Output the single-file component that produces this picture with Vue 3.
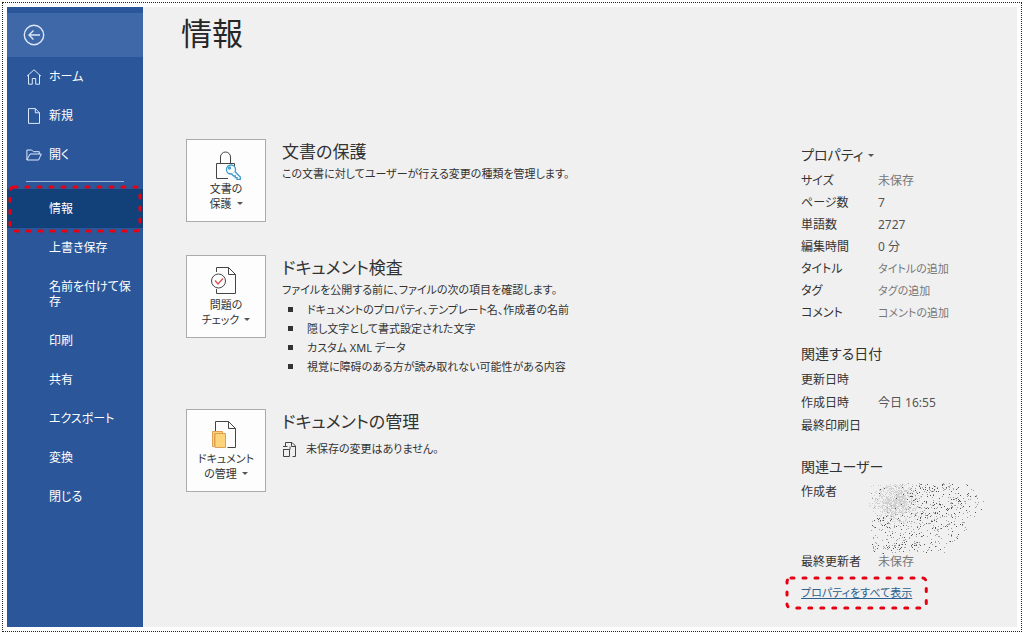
<script setup>
const places = [
  { label: 'ホーム', icon: 'home' },
  { label: '新規', icon: 'file' },
  { label: '開く', icon: 'folder' }
]
const commands = ['上書き保存', '名前を付けて保存', '印刷', '共有', 'エクスポート', '変換', '閉じる']
const checks = [
  'ドキュメントのプロパティ、テンプレート名、作成者の名前',
  '隠し文字として書式設定された文字',
  'カスタム XML データ',
  '視覚に障碍のある方が読み取れない可能性がある内容'
]
const properties = [
  { name: 'サイズ', value: '未保存' },
  { name: 'ページ数', value: '7', kind: 'strong' },
  { name: '単語数', value: '2727', kind: 'strong' },
  { name: '編集時間', value: '0 分', kind: 'strong' },
  { name: 'タイトル', value: 'タイトルの追加', kind: 'hint' },
  { name: 'タグ', value: 'タグの追加', kind: 'hint' },
  { name: 'コメント', value: 'コメントの追加', kind: 'hint' }
]
const dates = [
  { name: '更新日時', value: '' },
  { name: '作成日時', value: '今日 16:55', kind: 'strong' },
  { name: '最終印刷日', value: '' }
]

// Speckled pattern that hides the author's name
let seed = 7
const random = () => {
  seed = (seed * 16807) % 2147483647
  return seed / 2147483647
}
const dot = (x, y) => `M${Math.round(x)} ${Math.round(y)}.5h1`
const fine = []
for (let i = 0; i < 800; i++) {
  const x = 28 + (random() + random() + random() - 1.5) * 20
  const y = 18 + (random() + random() - 1) * 24
  if (y > 1) fine.push(dot(x, y))
}
const grey = []
const dark = []
while (grey.length + dark.length < 620) {
  const x = random() * 120
  const y = random() * 70
  const edge = y < 34 ? 120 - Math.abs(y - 20) * 0.8 : 112 - (y - 32) * 0.9
  const density = (y > 32 ? 0.9 : x > 40 ? 1 : 0.25) * (x > edge - 18 ? 0.45 : 1)
  if (x > 4 && x < edge && random() < density) {
    ;(random() < 0.35 ? dark : grey).push(dot(x, y))
  }
}
const finePath = fine.join('')
const greyPath = grey.join('')
const darkPath = dark.join('')
</script>

<template>
  <div class="frame">
    <nav class="side">
      <div class="back-bar">
        <button class="back" aria-label="戻る">
          <svg width="22" height="22" viewBox="0 0 22 22"><circle cx="11" cy="11" r="9.7" /><path d="M17 11H6M10.5 6.500L6 11l4.500 4.500" /></svg>
        </button>
      </div>
      <button v-for="p in places" :key="p.label" class="item">
        <svg v-if="p.icon === 'home'" width="16" height="16" viewBox="0 0 16 16"><path d="M1 7.200L8 .8l7 6.400M2.500 6v9.200h3.800V9.500h3.400v5.700h3.800V6" /></svg>
        <svg v-else-if="p.icon === 'file'" width="16" height="16" viewBox="0 0 16 16"><path d="M2.500.6h6.800l4.200 4.200v10.600h-11zM9.300.6v4.200h4.200" /></svg>
        <svg v-else width="16" height="16" viewBox="0 0 16 16"><path d="M.9 13V3h4.800l1.600 1.700h6V7M.9 13L4 7h11.300l-2.700 6z" /></svg>
        <span>{{ p.label }}</span>
      </button>
      <hr class="rule">
      <button class="item current" aria-current="page">
        <span>情報</span>
        <svg class="mark" aria-hidden="true"><rect x="2" y="2" rx="4" /></svg>
      </button>
      <button v-for="c in commands" :key="c" class="item"><span>{{ c }}</span></button>
    </nav>

    <main class="main">
      <h1>情報</h1>
      <div class="columns">
        <div class="actions">
          <section class="action">
            <button class="tile">
              <svg width="30" height="30" viewBox="0 0 30 30">
                <path class="ink" d="M17 28.500H5.500v-15h18V17M9.500 13.500V7a5 5 0 0 1 10 0v6.500" />
                <circle class="blue paper" cx="20" cy="19.500" r="4.500" /><circle class="blue" cx="18.500" cy="18" r="1" />
                <path class="blue paper" d="M23.800 21.500l5.500 5.500v2.300h-3.300v-1.700h-1.700V26h-1.700l-2-2" />
              </svg>
              <span>文書の<br>保護<i class="arrow"></i></span>
            </button>
            <div>
              <h2>文書の保護</h2>
              <p>この文書に対してユーザーが行える変更の種類を管理します。</p>
            </div>
          </section>

          <section class="action tall">
            <button class="tile">
              <svg width="30" height="30" viewBox="0 0 30 30">
                <path class="ink" d="M5.500 6V1.500h12l7 7v19h-19V23M17.500 1.500v7h7" />
                <circle class="ink paper" cx="7.500" cy="15" r="7" /><path class="red" d="M4 14.500l3 3.500 5-5.500" />
              </svg>
              <span>問題の<br>チェック<i class="arrow"></i></span>
            </button>
            <div>
              <h2>ドキュメント検査</h2>
              <p>ファイルを公開する前に、ファイルの次の項目を確認します。</p>
              <ul>
                <li v-for="c in checks" :key="c">{{ c }}</li>
              </ul>
            </div>
          </section>

          <section class="action">
            <button class="tile">
              <svg width="30" height="30" viewBox="0 0 30 30">
                <path class="ink" d="M4.500 11V1.500h13l7 7v19h-8M17.500 1.500v7h7" />
                <path class="gold" d="M1.500 11.500h10v2h-8v13h-2zM4 13.500h10.500v14H4z" />
              </svg>
              <span>ドキュメント<br>の管理<i class="arrow"></i></span>
            </button>
            <div>
              <h2>ドキュメントの管理</h2>
              <p class="status">
                <svg width="15" height="17" viewBox="0 0 15 17"><path class="ink" d="M3.500 5V1.500h6.500l3.500 3.500v10.500h-3M9.500 1.500v4h4M1 5.500h4.500M1 8.500h4M1.500 8.500v7h6v-7zM8 5.500v3" /></svg>
                <span>未保存の変更はありません。</span>
              </p>
            </div>
          </section>
        </div>

        <aside class="details">
          <button class="heading">プロパティ<i class="arrow"></i></button>
          <dl>
            <div v-for="p in properties" :key="p.name"><dt>{{ p.name }}</dt><dd :class="p.kind">{{ p.value }}</dd></div>
          </dl>
          <h3>関連する日付</h3>
          <dl class="dates">
            <div v-for="d in dates" :key="d.name"><dt>{{ d.name }}</dt><dd :class="d.kind">{{ d.value }}</dd></div>
          </dl>
          <h3>関連ユーザー</h3>
          <dl>
            <div class="author">
              <dt>作成者</dt>
              <dd>
                <svg class="speckle" width="122" height="72" viewBox="0 0 122 72">
                  <path class="fine" :d="finePath" /><path class="grey" :d="greyPath" /><path class="dark" :d="darkPath" />
                </svg>
              </dd>
            </div>
            <div><dt>最終更新者</dt><dd>未保存</dd></div>
          </dl>
          <div class="all">
            <a href="#">プロパティをすべて表示</a>
            <svg class="mark" aria-hidden="true"><rect x="2" y="2" rx="4" /></svg>
          </div>
        </aside>
      </div>
    </main>
  </div>
</template>

<style>
body {
  margin: 0;
  background: #fff;
}
</style>

<style scoped>
.frame {
  box-sizing: border-box;
  min-height: calc(100vh - 4px);
  margin: 2px;
  padding: 4px;
  border: 1px dotted #222;
  display: flex;
  font: 12px/16px "Noto Sans", "Noto Sans CJK JP", sans-serif;
  font-feature-settings: "palt";
  color: #333;
}
button {
  font: inherit;
  font-feature-settings: inherit;
  color: inherit;
  margin: 0;
  padding: 0;
  border: 0;
  background: none;
}
h1, h2, h3, p, dl, dd, ul {
  margin: 0;
  padding: 0;
  font-weight: 400;
}
svg {
  fill: none;
  flex: none;
}
.side {
  width: 136px;
  flex: none;
  box-sizing: border-box;
  padding-top: 6px;
  background: #2b579a;
  color: #fff;
}
.back-bar {
  height: 44px;
  padding-left: 16px;
  display: flex;
  align-items: center;
  background: #3e68a7;
}
.back {
  display: flex;
}
.side svg {
  stroke: #dce8fa;
}
.back svg {
  stroke-width: 1.4;
}
.item {
  position: relative;
  width: 100%;
  padding: 12px 8px 12px 42px;
  display: flex;
  align-items: center;
  text-align: left;
  line-height: 15px;
}
.item > svg:not(.mark) {
  margin: -1px 7px -1px -23px;
}
.rule {
  height: 1px;
  margin: 7px 19px;
  border: 0;
  background: #a3b8d8;
}
.item.current {
  background: #124078;
}
.mark {
  position: absolute;
  inset: -4px 1px -5px 1px;
  width: calc(100% - 2px);
  height: calc(100% + 9px);
}
.mark rect {
  width: calc(100% - 4px);
  height: calc(100% - 4px);
  stroke: #e60012;
  stroke-width: 3;
  stroke-linecap: round;
  stroke-dasharray: 3 9;
}
.main {
  flex: 1;
  padding: 6px 0 0 38px;
  background: #f0f0f0;
}
h1 {
  font-size: 31px;
  line-height: 40px;
  color: #262626;
}
.columns {
  display: flex;
  justify-content: space-between;
  margin-top: 86px;
}
.actions {
  padding-left: 5px;
  display: flex;
  flex-direction: column;
  gap: 33px;
}
.action {
  display: flex;
  gap: 16px;
  min-height: 83px;
}
.action.tall {
  min-height: 119px;
}
.tile {
  box-sizing: border-box;
  width: 80px;
  height: 83px;
  flex: none;
  border: 1px solid #ababab;
  background: #fdfdfd;
  display: flex;
  flex-direction: column;
  align-items: center;
  justify-content: center;
  font-size: 11px;
  line-height: 15px;
}
.tile svg {
  margin-bottom: 1px;
}
.ink {
  stroke: #444;
}
.blue {
  stroke: #3d9bd0;
  stroke-width: 1.3;
}
.paper {
  fill: #fdfdfd;
}
.red {
  stroke: #d9534f;
  stroke-width: 1.3;
}
.gold {
  fill: #fcd47c;
  stroke: #e0a050;
}
.arrow {
  display: inline-block;
  margin-left: 5px;
  vertical-align: 3px;
  border: 3px solid transparent;
  border-top-color: #555;
  border-bottom: 0;
}
h2 {
  font-size: 17px;
  line-height: 25px;
}
ul {
  list-style: none;
  font-size: 11px;
}
li {
  display: flex;
  align-items: center;
  gap: 14px;
  padding-left: 6px;
  line-height: 19px;
}
li::before {
  content: "";
  width: 5px;
  height: 5px;
  background: #333;
}
.action p {
  font-size: 11px;
  line-height: 20px;
}
.action .status {
  display: flex;
  align-items: center;
  gap: 9px;
  padding-top: 5px;
}
.details {
  width: 216px;
  flex: none;
  padding-top: 6px;
}
.heading, h3 {
  font-size: 14px;
  line-height: 20px;
}
.heading {
  margin-bottom: 5px;
}
h3 {
  margin-top: 20px;
  padding-bottom: 4px;
}
dl > div {
  display: flex;
  line-height: 22px;
}
.dates > div {
  line-height: 23px;
}
dt {
  width: 77px;
}
dd {
  color: #777;
}
dd.strong {
  color: #555;
}
dd.hint {
  font-size: 11px;
}
.author {
  height: 70px;
}
.speckle {
  display: block;
  margin: 2px 0 0 -11px;
}
.fine {
  stroke: #cfcfcf;
}
.grey {
  stroke: #a0a0a0;
}
.dark {
  stroke: #555;
}
.all {
  position: relative;
  width: max-content;
  margin: 8px 0 0 -16px;
  padding: 2px 16px;
  font-size: 11px;
  line-height: 20px;
}
.all .mark {
  inset: -5px 0;
  width: 100%;
  height: calc(100% + 10px);
}
a {
  color: #2b5f8c;
}
</style>
